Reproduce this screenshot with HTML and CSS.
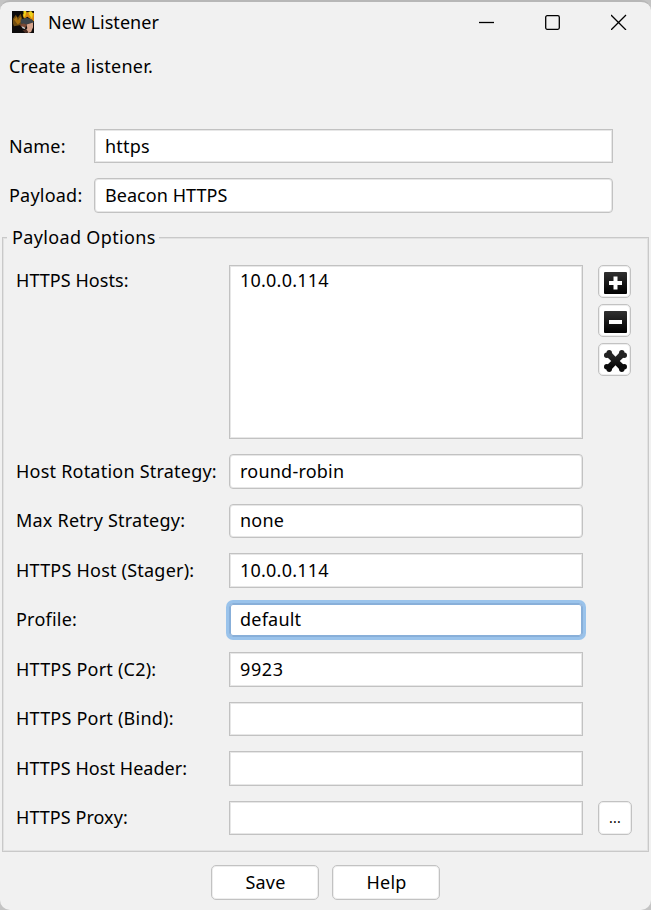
FILE: index.html
```html
<!DOCTYPE html>
<html lang="en">
<head>
<meta charset="utf-8">
<title>New Listener</title>
<link rel="stylesheet" href="styles.css">
</head>
<body>
<main class="window">
  <header class="titlebar">
    <svg class="avatar" viewBox="0 0 23 23" aria-hidden="true">
      <path fill="#0d0b0b" d="M0 0h23v23H0z"/>
      <path fill="#6f4c10" d="M1 8l3-4 2 3 3-4 2 6 3 2-6 4-6 1-1-3z"/>
      <path fill="#a9700f" d="M2 9l3-3 1 4 3-4 1 5-4 3z"/>
      <path fill="#d98a10" d="M11 4l4-3 8 1v9l-3-2-4-3-3 2z"/>
      <path fill="#ecd21a" d="M12 0h3l-1 5-2 2zM17 1l3-1 2 3-1 5-3-4z"/>
      <path fill="#3c4449" d="M9 9l6-2 6 2 2 3-9 2-5-1z"/>
      <path fill="#d6a48c" d="M15 14l7-2v5l-2 5-3 1-3-3 2-2z"/>
      <path fill="#7a4a35" d="M8 14l4-1 3 1-1 4-4-1z"/>
      <path fill="#c9ced0" d="M10 16l3 1 1 2-3-1z"/>
      <path fill="#4a2c22" d="M11 20l4-1 2 3-3 1z"/>
    </svg>
    <h1 class="title">New Listener</h1>
    <div class="controls">
      <svg class="control" viewBox="0 0 16 16"><path d="M0 8.500h15"/></svg>
      <svg class="control" viewBox="0 0 16 16"><rect x=".7" y="1.700" width="13.600" height="13.600" rx="1.500"/></svg>
      <svg class="control" viewBox="0 0 16 16"><path d="M0 1l15 15M15 1L0 16"/></svg>
    </div>
  </header>
  <p class="intro">Create a listener.</p>
  <div class="basics">
    <span class="label">Name:</span><div class="field">https</div>
    <span class="label">Payload:</span><div class="field combo snug">Beacon HTTPS</div>
  </div>
  <section class="options">
    <h2 class="legend">Payload Options</h2>
    <div class="hosts">
      <span class="label snug">HTTPS Hosts:</span>
      <div class="field list">10.0.0.114</div>
      <div class="tools">
        <button class="tool"><svg viewBox="0 0 33 33"><defs><linearGradient id="ink" x2="0" y2="1"><stop stop-color="#303030"/><stop offset="1" stop-color="#000"/></linearGradient></defs><rect x="6" y="7" width="23" height="22" rx="1" fill="url(#ink)"/><path fill="#fff" d="M15.500 11.500h4v4.500h4.500v4h-4.500v4.500h-4V20H11v-4h4.500z"/></svg></button>
        <button class="tool"><svg viewBox="0 0 33 33"><rect x="6" y="7" width="23" height="22" rx="1" fill="url(#ink)"/><path fill="#fff" d="M11 16h13v4H11z"/></svg></button>
        <button class="tool"><svg viewBox="0 0 33 33"><g fill="url(#ink)" stroke="none"><path d="M8.500 13.500l4.500-4.500 4.500 4.700L22 9l4.500 4.500-4.700 4.500 4.700 4.500-4.500 4.500-4.500-4.700-4.500 4.700-4.500-4.500 4.700-4.500z"/></g><g fill="#222"><circle cx="11.200" cy="9.700" r="2.700"/><circle cx="8.700" cy="12.200" r="2.700"/><circle cx="23.800" cy="9.700" r="2.700"/><circle cx="26.300" cy="12.200" r="2.700"/></g><g fill="#0c0c0c"><circle cx="8.700" cy="23.800" r="2.700"/><circle cx="11.200" cy="26.300" r="2.700"/><circle cx="26.300" cy="23.800" r="2.700"/><circle cx="23.800" cy="26.300" r="2.700"/></g></svg></button>
      </div>
    </div>
    <div class="rows">
      <span class="label">Host Rotation Strategy:</span><div class="field combo">round-robin</div>
      <span class="label">Max Retry Strategy:</span><div class="field combo">none</div>
      <span class="label">HTTPS Host (Stager):</span><div class="field">10.0.0.114</div>
      <span class="label">Profile:</span><div class="field combo focused">default</div>
      <span class="label">HTTPS Port (C2):</span><div class="field digits">9923</div>
      <span class="label">HTTPS Port (Bind):</span><div class="field"></div>
      <span class="label snug">HTTPS Host Header:</span><div class="field"></div>
      <span class="label snug">HTTPS Proxy:</span><div class="field"></div><button class="button more">...</button>
    </div>
  </section>
  <footer class="actions">
    <button class="button">Save</button>
    <button class="button">Help</button>
  </footer>
</main>
</body>
</html>
```
FILE: styles.css
```css
* { box-sizing: border-box; }
body { margin: 0; background: #c4c4c4; }
.window {
  height: 910px;
  border-top: 2px solid #b7b7b7;
  border-radius: 10px;
  background: #f1f1f1;
  color: #000;
  font: 18px/24px "Noto Sans", "Open Sans", sans-serif;
  letter-spacing: .22px;
}
.titlebar { display: flex; align-items: center; height: 40px; padding: 0 24px 0 12px; }
.avatar { width: 22px; height: 22px; }
.title { margin: 0 0 0 14px; font: inherit; letter-spacing: 0.05px; }
.controls { display: flex; gap: 50px; margin-left: auto; }
.control { width: 16px; height: 16px; fill: none; stroke: #000; stroke-width: 1.3; }
.intro { margin: 12px 9px 0; height: 24px; }
.basics {
  display: grid;
  grid-template: 34px 35px / 85px 519px;
  row-gap: 15px;
  align-items: center;
  padding: 51px 0 0 9px;
}
.label { white-space: nowrap; padding-bottom: 1px; }
.field {
  height: 100%;
  border: 1px solid #c2c2c2;
  box-shadow: inset 0 0 0 1px #e7e7e7;
  background: #fff;
  padding: 3.5px 10px;
}
.combo { border-radius: 4px; }
.snug { letter-spacing: .05px; }
.digits { letter-spacing: .6px; }
.options {
  height: 615px;
  margin: 24px 2px 0;
  border: 1px solid #c9c9c9;
  box-shadow: inset 0 0 0 1px #e2e2e2;
  padding-left: 13px;
}
.legend { width: 152px; height: 24px; margin: -13px 0 0 -9px; padding: 0 5px; background: #f1f1f1; font: inherit; letter-spacing: .35px; white-space: nowrap; }
.hosts { display: grid; grid-template-columns: 213px 354px 33px; margin-top: 16px; height: 174px; }
.hosts .label { padding-top: 3px; }
.list { padding-top: 2px; }
.tools { display: grid; gap: 6px; align-content: start; margin-left: 15px; }
.tool, .button { border: 1px solid #c2c2c2; border-radius: 5px; background: #fff; padding: 0; font: inherit; color: #000; letter-spacing: .22px; box-shadow: inset 0 0 0 1px #eee; }
.tool { width: 33px; height: 33px; }
.tool svg { display: block; margin: -1px; width: 33px; height: 33px; fill: none; }
.rows { display: grid; grid-template-columns: 213px 354px 34px; grid-auto-rows: 34.6px; row-gap: 14.93px; align-items: center; margin-top: 15px; }
.rows .label, .rows .field { grid-column: 1; }
.rows .field { grid-column: 2; }
.focused { border-color: #88afd9; box-shadow: 0 0 0 3px #9ac3eb, inset 0 0 0 1px #88afd9; }
.more { grid-column: 3; width: 34px; height: 34px; margin-left: 15px; font-size: 14px; }
.actions { display: flex; justify-content: center; gap: 13px; margin-top: 13px; }
.actions .button { width: 108px; height: 35px; padding: 0 0 2px 1px; }
```
